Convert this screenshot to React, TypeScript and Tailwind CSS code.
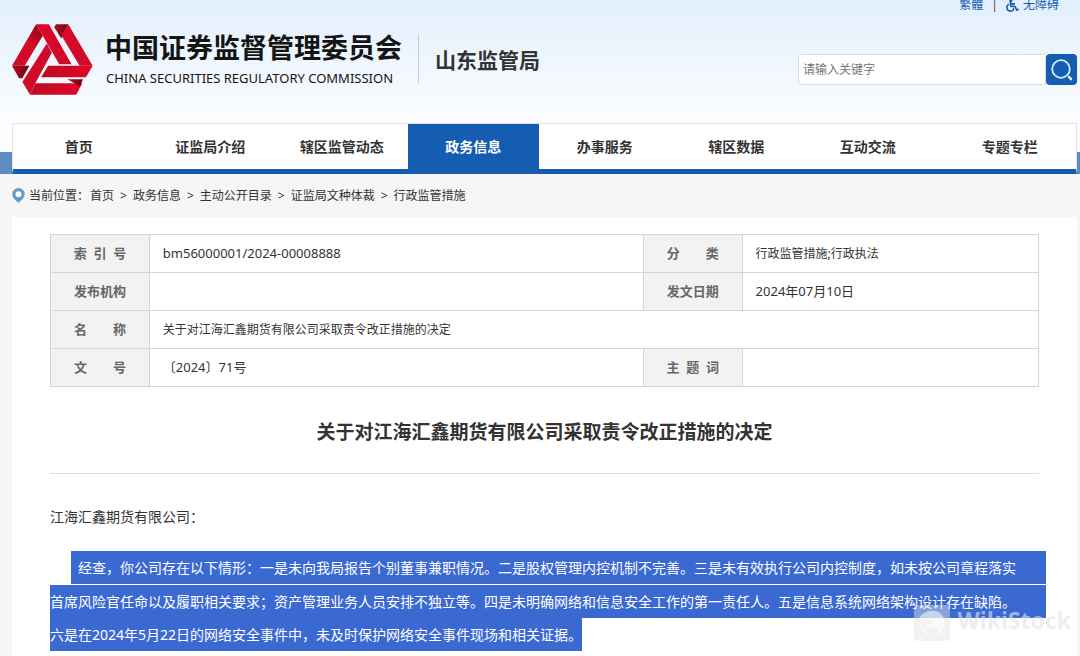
import { FaWheelchair } from "react-icons/fa";

type Line = { text: string; className: string };

const navItems = [
  "首页",
  "证监局介绍",
  "辖区监管动态",
  "政务信息",
  "办事服务",
  "辖区数据",
  "互动交流",
  "专题专栏",
];

const crumbs = ["首页", "政务信息", "主动公开目录", "证监局文种体裁", "行政监管措施"];

const selectedLines: Line[] = [
  {
    text: "经查，你公司存在以下情形：一是未向我局报告个别董事兼职情况。二是股权管理内控机制不完善。三是未有效执行公司内控制度，如未按公司章程落实",
    className: "ml-[21px] -mr-[7px] mb-px pl-[7px]",
  },
  {
    text: "首席风险官任命以及履职相关要求；资产管理业务人员安排不独立等。四是未明确网络和信息安全工作的第一责任人。五是信息系统网络架构设计存在缺陷。",
    className: "-mr-[7px]",
  },
  {
    text: "六是在2024年5月22日的网络安全事件中，未及时保护网络安全事件现场和相关证据。",
    className: "w-fit",
  },
];

const Logo = () => (
  <svg viewBox="38 71 242 212" className="h-[71px] w-[81px] shrink-0" aria-hidden="true">
    <defs>
      <linearGradient id="leg" x1="0" y1="1" x2="1" y2="0">
        <stop offset="0" stopColor="#cc0c28" />
        <stop offset="0.55" stopColor="#d80a2a" />
        <stop offset="1" stopColor="#7d0712" />
      </linearGradient>
      <linearGradient id="strip" x1="0" y1="0" x2="1" y2="1">
        <stop offset="0" stopColor="#e0062c" />
        <stop offset="1" stopColor="#c90c28" />
      </linearGradient>
      <linearGradient id="bar" x1="0" y1="0" x2="1" y2="0">
        <stop offset="0" stopColor="#b80c22" />
        <stop offset="1" stopColor="#e3062a" />
      </linearGradient>
      <linearGradient id="fold" x1="0" y1="0" x2="1" y2="0">
        <stop offset="0" stopColor="#b00d1f" />
        <stop offset="1" stopColor="#6f0510" />
      </linearGradient>
    </defs>
    <path d="M110 72 L130 106 L76 196 H38 Z" fill="url(#leg)" />
    <path d="M38 196 H90 L69 233 H59 Z" fill="url(#fold)" />
    <path d="M110 72 H148 L216 191 H179 Z" fill="url(#strip)" />
    <path d="M170 72 H206 L185 114 L164 80 Z" fill="url(#fold)" />
    <path d="M206 72 L279 196 H240 L186 106 Z" fill="url(#strip)" />
    <path d="M146 196 H279 L259 230 H125 Z" fill="url(#bar)" />
    <path d="M142 129 L157 157 L108 247 L92 282 L69 244 Z" fill="#d00b29" />
    <path d="M108 248 H248 L230 282 H92 Z" fill="url(#bar)" />
    <path d="M204 236 H250 L241 258 Z" fill="url(#fold)" />
  </svg>
);

const Pin = () => (
  <svg viewBox="0 0 13 15" className="h-[15px] w-[13px]" aria-hidden="true">
    <path
      d="M6.5 0 A6.2 6.2 0 0 0 0.3 6.2 C0.3 10 4 12 6.5 15 C9 12 12.7 10 12.7 6.2 A6.2 6.2 0 0 0 6.5 0 Z"
      fill="#659bc8"
    />
    <circle cx="6.5" cy="6.2" r="3" fill="#fff" />
  </svg>
);

const Th = ({ children }: { children: string }) => (
  <th
    scope="row"
    className="h-[38px] border border-[#ccd6df] bg-[#f2f2f2] text-center text-[13px] font-bold whitespace-pre text-[#666]"
  >
    {children}
  </th>
);

const Td = ({
  children,
  colSpan,
  numeric,
}: {
  children?: string;
  colSpan?: number;
  numeric?: boolean;
}) => (
  <td
    colSpan={colSpan}
    className={`h-[38px] border border-[#ccd6df] px-[13px] ${numeric ? "text-[13px]" : "text-[12px]"}`}
  >
    {children}
  </td>
);

const Header = () => (
  <header className="bg-linear-to-b from-[#e2effc] to-[#fcfdff]">
    <div className="mr-[3px] ml-3">
      <div className="flex h-[14px] items-end justify-end gap-2 pr-[18px] text-[12px] leading-[18px] text-[#145db0]">
        <a href="#fanti">繁體</a>
        <span className="text-[#444]">|</span>
        <a href="#access" className="flex items-center gap-1">
          <FaWheelchair className="size-[13px]" />
          无障碍
        </a>
      </div>
      <div className="flex h-[109px] items-start">
        <div className="mt-[10px]">
          <Logo />
        </div>
        <div className="mt-[18px] ml-3 text-[#151515]">
          <h1 className="text-[27px] leading-[32px] font-bold">中国证券监督管理委员会</h1>
          <p className="mt-1 ml-px text-[13px] leading-[20px]">
            CHINA SECURITIES REGULATORY COMMISSION
          </p>
        </div>
        <div className="mt-5 ml-4 h-[49px] border-l border-[#ccc]" />
        <h2 className="mt-[31px] ml-4 text-[21px] leading-[30px] font-bold text-[#333]">
          山东监管局
        </h2>
        <form className="mt-10 ml-auto flex h-[31px] w-[279px]" role="search">
          <input
            type="text"
            aria-label="请输入关键字"
            placeholder="请输入关键字"
            className="min-w-0 flex-1 rounded-l-sm border border-[#ddd] bg-white px-1 text-[12px] placeholder:text-[#757575]"
          />
          <button
            type="button"
            aria-label="搜索"
            className="flex w-[31px] items-center justify-center rounded-sm bg-[#145db0]"
          >
            <svg viewBox="0 0 22 22" className="size-[22px]" fill="none" stroke="#dce9f7">
              <circle cx="10" cy="10" r="8.8" strokeWidth="1.8" />
              <path d="M18 18 L20 20" strokeWidth="2.6" strokeLinecap="round" />
            </svg>
          </button>
        </form>
      </div>
    </div>
  </header>
);

const Nav = () => (
  <nav className="bg-linear-to-b from-[#fcfdff] from-56% to-[#5b8dc0] to-56%">
    <ul className="mr-[3px] ml-3 flex border border-b-[5px] border-[#e0e4e8] border-b-[#145db0] bg-white text-[14px] font-bold">
      {navItems.map((item) => (
        <li key={item} className="flex-12 last:flex-13 last:*:pl-[10px]">
          <a
            href="#nav"
            className={
              item === "政务信息"
                ? "block bg-[#145db0] text-center leading-[45px] text-white"
                : "block text-center leading-[45px] text-[#333]"
            }
          >
            {item}
          </a>
        </li>
      ))}
    </ul>
  </nav>
);

const App = () => {
  return (
    <div className="relative min-h-screen overflow-hidden bg-[#f6f6f6] font-['Noto_Sans','Noto_Sans_CJK_SC',sans-serif] text-[#333]">
      <Header />
      <Nav />
      <div className="mr-[3px] ml-3 flex h-[43px] items-center text-[12px]">
        <Pin />
        <span className="ml-1">当前位置：</span>
        <div className="ml-px flex gap-[6px]">
          {crumbs.map((crumb, i) => (
            <span key={crumb} className="flex gap-[6px]">
              {i > 0 && <span>&gt;</span>}
              <a href="#crumb">{crumb}</a>
            </span>
          ))}
        </div>
      </div>
      <main className="mr-[3px] ml-3 min-h-[440px] bg-white px-[38px] pt-[17px]">
        <table className="w-full table-fixed border-collapse">
          <colgroup>
            <col className="w-[10%]" />
            <col className="w-[50%]" />
            <col className="w-[10%]" />
            <col className="w-[30%]" />
          </colgroup>
          <tbody>
            <tr>
              <Th>索  引  号</Th>
              <Td numeric>bm56000001/2024-00008888</Td>
              <Th>分　　类</Th>
              <Td>行政监管措施;行政执法</Td>
            </tr>
            <tr>
              <Th>发布机构</Th>
              <Td />
              <Th>发文日期</Th>
              <Td numeric>2024年07月10日</Td>
            </tr>
            <tr>
              <Th>名　　称</Th>
              <Td colSpan={3}>关于对江海汇鑫期货有限公司采取责令改正措施的决定</Td>
            </tr>
            <tr>
              <Th>文　　号</Th>
              <Td numeric>〔2024〕71号</Td>
              <Th>主  题  词</Th>
              <Td />
            </tr>
          </tbody>
        </table>
        <h2 className="mt-[30px] border-b border-[#ddd] pb-[26px] text-center text-[19px] leading-[30px] font-bold">
          关于对江海汇鑫期货有限公司采取责令改正措施的决定
        </h2>
        <div className="text-[14px] leading-[33px]">
          <p className="mt-[26px]">江海汇鑫期货有限公司：</p>
          <p className="mt-[18px] text-white">
            {selectedLines.map(({ text, className }) => (
              <span key={text} className={`block bg-[#3b69d2] whitespace-nowrap ${className}`}>
                {text}
              </span>
            ))}
          </p>
        </div>
      </main>
      {/* watermark */}
      <div className="absolute right-[9px] bottom-4 flex items-start gap-2 text-[23px] leading-[30px] font-bold text-[#e4e4e4]/60">
        <svg viewBox="0 0 36 36" className="size-9" aria-hidden="true">
          <rect width="36" height="36" rx="4" fill="#e4e4e4" fillOpacity="0.45" />
          <path
            d="M5 14 C9 5 22 3 28 10 C34 18 30 29 21 31 C25 27 25 24 22 22 C18 24 13 23 11 20 C15 20 18 19 20 16 C15 12 9 12 5 14 Z"
            fill="#fff"
            fillOpacity="0.55"
          />
          <path
            d="M6 17 C6 25 12 31 19 31 C14 28 10 23 6 17 Z"
            fill="#fff"
            fillOpacity="0.55"
          />
        </svg>
        <span>WikiStock</span>
      </div>
    </div>
  );
};

export default App;
